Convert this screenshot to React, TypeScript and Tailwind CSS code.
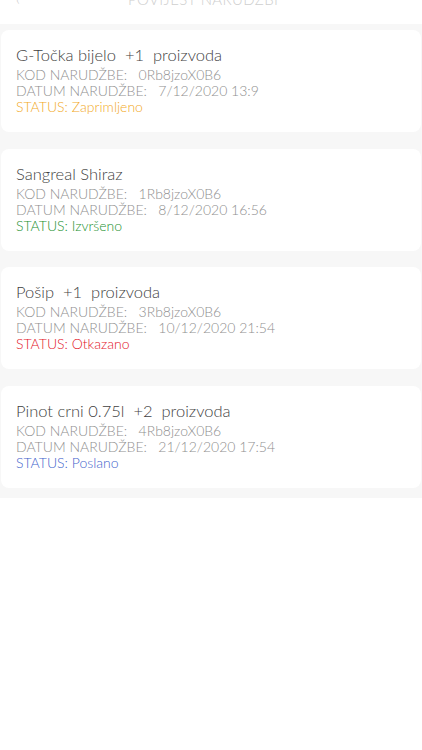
import React from 'react';

type Order = {
  title: string;
  code: string;
  date: string;
  status: string;
  color: string;
};

const orders: Order[] = [
  { title: 'G-Točka bijelo  +1  proizvoda', code: '0Rb8jzoX0B6', date: '7/12/2020 13:9', status: 'Zaprimljeno', color: 'text-[#f2aa1f]' },
  { title: 'Sangreal Shiraz', code: '1Rb8jzoX0B6', date: '8/12/2020 16:56', status: 'Izvršeno', color: 'text-[#23912f]' },
  { title: 'Pošip  +1  proizvoda', code: '3Rb8jzoX0B6', date: '10/12/2020 21:54', status: 'Otkazano', color: 'text-[#e3141f]' },
  { title: 'Pinot crni 0.75l  +2  proizvoda', code: '4Rb8jzoX0B6', date: '21/12/2020 17:54', status: 'Poslano', color: 'text-[#3f64cc]' },
];

export default function App() {
  return (
    <div className="min-h-[750px] bg-white font-['Lato',sans-serif] font-light">
      {/* header, scrolled mostly out of view */}
      <div className="h-6 overflow-hidden">
        <div className="-mt-[12px] flex items-center px-4 text-[15px] text-[#cfcfcf] whitespace-pre">
          <span className="w-[112px]">‹</span>
          <span className="tracking-wide">POVIJEST NARUDŽBI</span>
        </div>
      </div>

      <div className="bg-[#f7f7f7] pt-[6px] pb-[10px] flex flex-col gap-[16.5px]">
        {orders.map((o) => (
          <div key={o.code} className="bg-white rounded-lg mx-[1px] h-[102px] px-[15px] pt-[14px]">
            <div className="text-[16.5px] leading-[22px] text-[#3f3f3f] whitespace-pre">{o.title}</div>
            <div className="text-[14px] leading-[16px] text-[#8f8f8f] mt-[1px] whitespace-pre">
              <div>KOD NARUDŽBE:   {o.code}</div>
              <div>DATUM NARUDŽBE:   {o.date}</div>
              <div className={o.color}>STATUS: {o.status}</div>
            </div>
          </div>
        ))}
      </div>
    </div>
  );
}
